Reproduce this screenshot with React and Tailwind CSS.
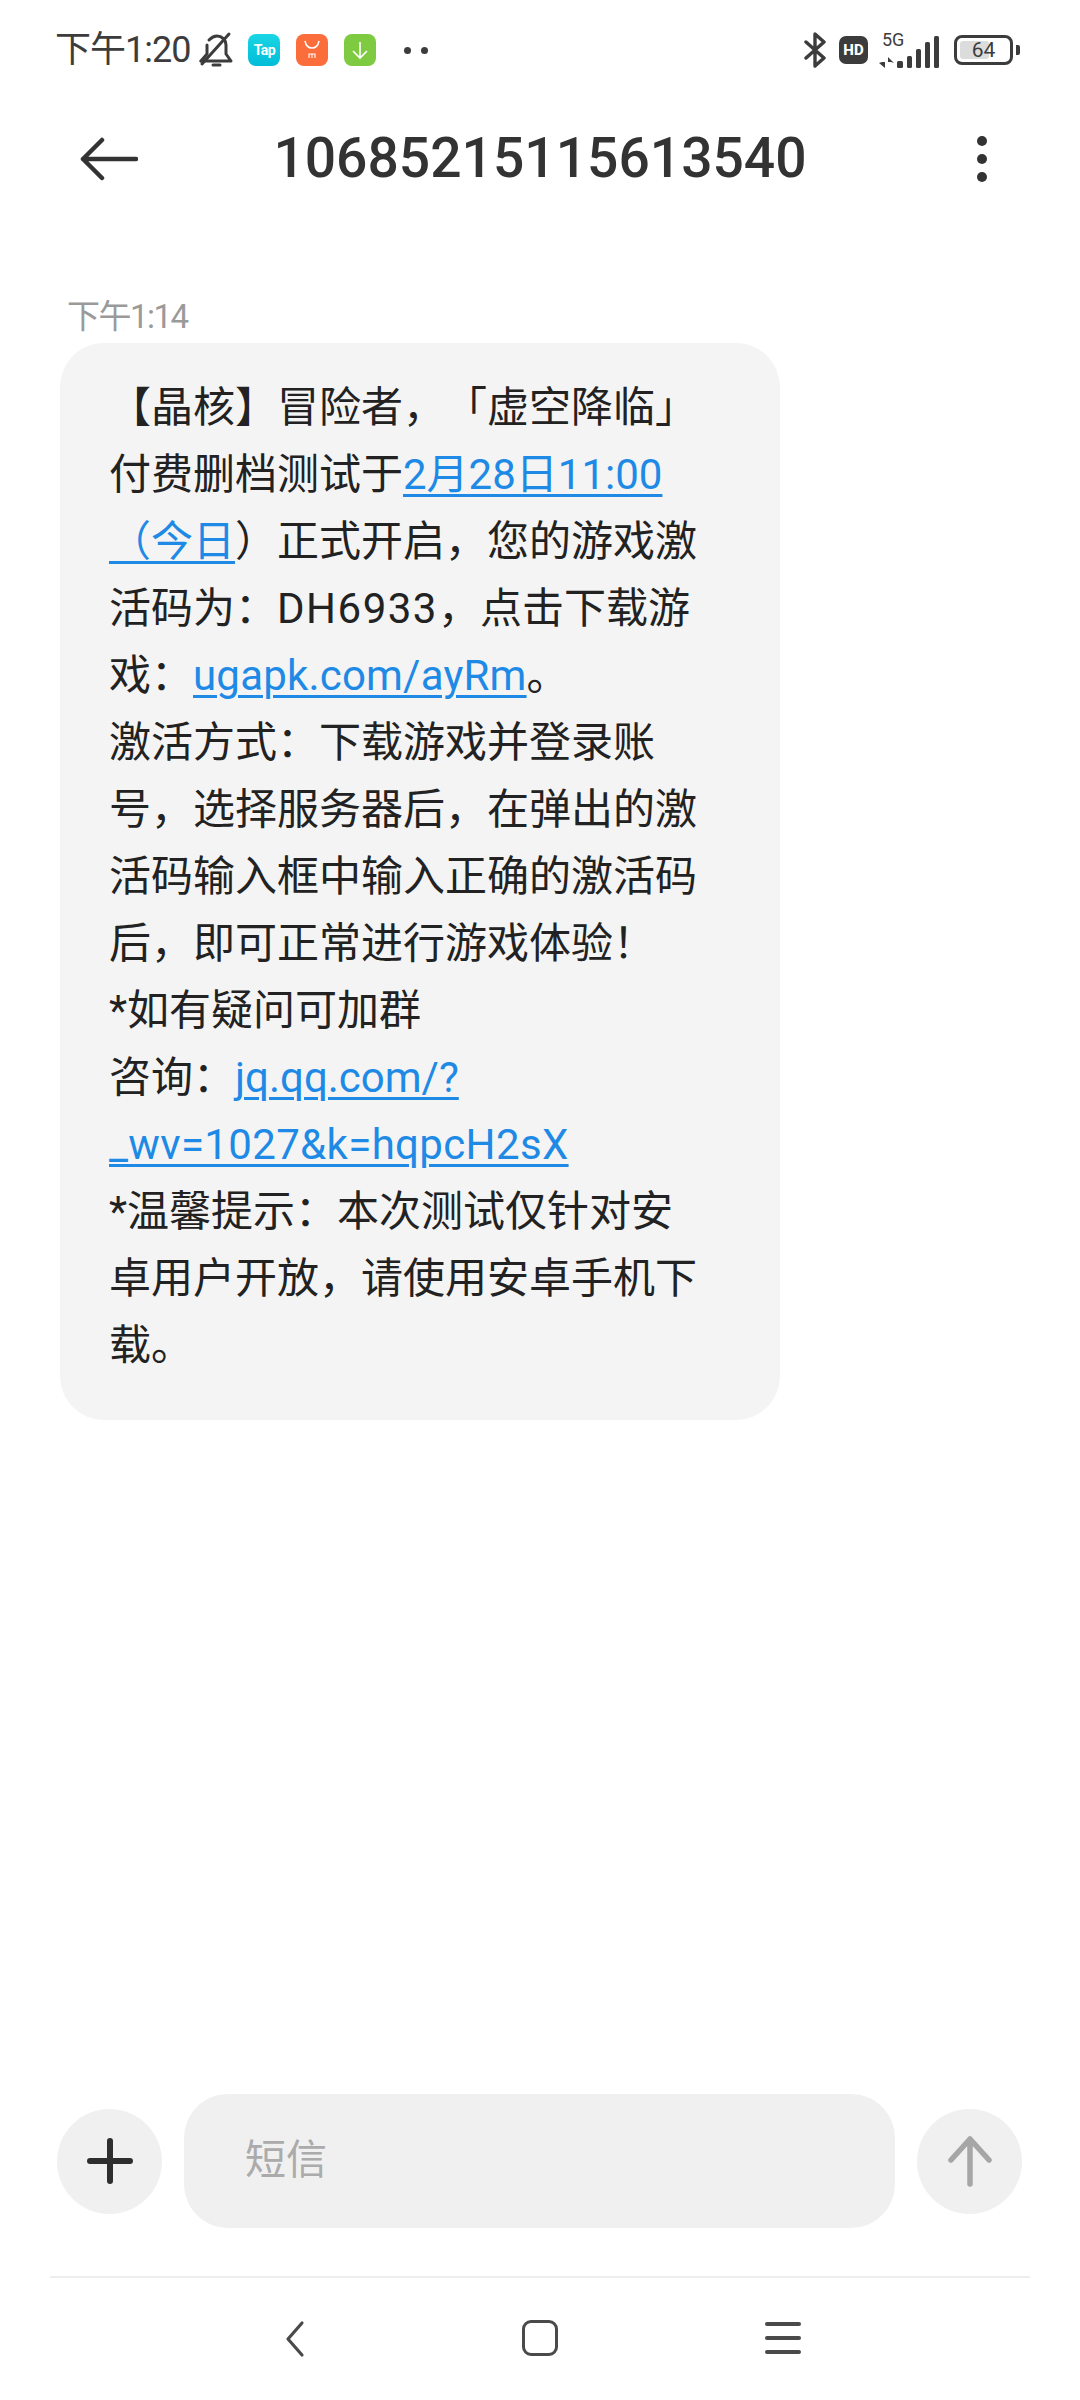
import { Fragment } from 'react';

const Link = ({ children }) => (
  <span className="text-[#1e8ae6] underline decoration-[3px] underline-offset-[5px]">{children}</span>
);

const lines = [
  '【晶核】冒险者，「虚空降临」',
  <Fragment>付费删档测试于<Link>2月28日11:00</Link></Fragment>,
  <Fragment><Link>（今日</Link>）正式开启，您的游戏激</Fragment>,
  <Fragment>活码为：<span className="tracking-[1.5px]">DH6933</span>，点击下载游</Fragment>,
  <Fragment>戏：<span className="tracking-[0.2px]"><Link>ugapk.com/ayRm</Link></span>。</Fragment>,
  '激活方式：下载游戏并登录账',
  '号，选择服务器后，在弹出的激',
  '活码输入框中输入正确的激活码',
  '后，即可正常进行游戏体验！',
  '*如有疑问可加群',
  <Fragment>咨询：<Link>jq.qq.com/?</Link></Fragment>,
  <span className="tracking-[0.35px]"><Link>_wv=1027&amp;k=hqpcH2sX</Link></span>,
  '*温馨提示：本次测试仅针对安',
  '卓用户开放，请使用安卓手机下',
  '载。',
];

function StatusBar() {
  return (
    <div className="h-[100px] flex items-center pl-[55px] pr-[60px] text-[#3c3c3c]">
      <span className="text-[36px] leading-none tracking-[-1px]">下午1:20</span>
      <svg className="ml-[9px]" width="36" height="38" viewBox="0 0 36 38" fill="none" stroke="#3c3c3c" strokeWidth="3" strokeLinecap="round" strokeLinejoin="round">
        <path d="M2 30h30l-5-7v-9c0-5-4-9-9-9-3 0-6 2-8 4" />
        <path d="M8 14v9l-6 7" />
        <path d="M3 33 30 3" />
        <path d="M14 34h7" />
      </svg>
      <div className="ml-[13px] w-[32px] h-[32px] rounded-[8px] bg-gradient-to-b from-[#19d6e4] to-[#00bcd8] flex items-center justify-center text-white text-[14px] font-bold tracking-[-0.5px]">Tap</div>
      <div className="ml-[16px] w-[32px] h-[32px] rounded-[8px] bg-[#fb6d3b] flex flex-col items-center justify-center">
        <svg width="20" height="22" viewBox="0 0 20 22" fill="none" stroke="#fff">
          <path d="M3 2c1 5 4 7 7 7s6-2 7-7" strokeWidth="1.5" />
          <path d="M7 19v-4h6v4M10 15v4" strokeWidth="1.1" />
        </svg>
      </div>
      <div className="ml-[16px] w-[32px] h-[32px] rounded-[8px] bg-[#7ecb41] flex items-center justify-center">
        <svg width="20" height="22" viewBox="0 0 20 22" fill="none" stroke="#fff" strokeWidth="1.6">
          <path d="M10 3v16M3 12l7 7 7-7" />
        </svg>
      </div>
      <div className="ml-[28px] w-[7px] h-[7px] rounded-full bg-[#3c3c3c]" />
      <div className="ml-[10px] w-[7px] h-[7px] rounded-full bg-[#3c3c3c]" />
      <div className="flex-1" />
      <svg width="22" height="36" viewBox="0 0 22 36" fill="none" stroke="#3c3c3c" strokeWidth="3.4" strokeLinejoin="round" strokeLinecap="round">
        <path d="M2 10l18 16-9 8V2l9 8L2 26" />
      </svg>
      <div className="ml-[13px] w-[29px] h-[28px] rounded-[7px] bg-[#3c3c3c] flex items-center justify-center text-white text-[15px] font-extrabold leading-none">HD</div>
      <div className="ml-[11px] w-[61px] h-[36px] relative">
        <span className="absolute left-[3px] top-[-3px] text-[18px] leading-[22px]">5G</span>
        <svg className="absolute left-0 top-0" width="61" height="36" viewBox="0 0 61 36" fill="#3c3c3c">
          <path d="M6 25v11L0 31l3-1h3zM9 25v11l0-6h3l3 1-6-6z" />
          <rect x="18" y="29" width="6" height="7" rx="1.5" />
          <rect x="28" y="24" width="5" height="12" rx="1.5" />
          <rect x="37" y="17" width="5" height="19" rx="1.5" />
          <rect x="46" y="10" width="5" height="26" rx="1.5" />
          <rect x="55" y="4" width="5" height="32" rx="1.5" />
        </svg>
      </div>
      <div className="ml-[14px] w-[59px] h-[30px] rounded-[8px] border-[3px] border-[#3c3c3c] p-[3px] relative flex">
        <div className="w-[62%] bg-[#dcdcdc] rounded-[3px]" />
        <span className="absolute inset-0 flex items-center justify-center text-[21px] leading-none">64</span>
      </div>
      <div className="ml-[3px] w-[4px] h-[10px] rounded-r-[2px] bg-[#3c3c3c]" />
    </div>
  );
}

function Header() {
  return (
    <div className="h-[118px] grid grid-cols-[1fr_auto_1fr] items-center text-[#333333]">
      <div className="pl-[80px]">
        <svg className="block" width="58" height="44" viewBox="0 0 58 44" fill="none" stroke="#333333" strokeWidth="4.5" strokeLinecap="round" strokeLinejoin="round">
          <path d="M56 22H3M22 3 3 22l19 19" />
        </svg>
      </div>
      <div className="text-[55.2px] leading-none font-medium">10685215115613540</div>
      <div className="flex flex-col items-end gap-[8px] pr-[93px]">
        <div className="w-[10px] h-[10px] rounded-full bg-[#333333]" />
        <div className="w-[10px] h-[10px] rounded-full bg-[#333333]" />
        <div className="w-[10px] h-[10px] rounded-full bg-[#333333]" />
      </div>
    </div>
  );
}

function Composer() {
  return (
    <div className="flex items-center pl-[57px] pr-[58px]">
      <div className="w-[105px] h-[105px] rounded-full bg-[#f0f0f0] flex items-center justify-center">
        <svg width="46" height="46" viewBox="0 0 46 46" stroke="#2e2e2e" strokeWidth="6" strokeLinecap="round">
          <path d="M23 3v40M3 23h40" />
        </svg>
      </div>
      <div className="ml-[22px] w-[711px] h-[134px] rounded-[44px] bg-[#f0f0f0] flex items-center pl-[61px] text-[41px] text-[#ababab]">短信</div>
      <div className="ml-[22px] w-[105px] h-[105px] rounded-full bg-[#f0f0f0] flex items-center justify-center">
        <svg width="46" height="52" viewBox="0 0 46 52" fill="none" stroke="#a6a6a6" strokeWidth="5.5" strokeLinecap="round" strokeLinejoin="round">
          <path d="M23 49V4M4 25 23 4l19 21" />
        </svg>
      </div>
    </div>
  );
}

function NavBar() {
  return (
    <div className="mx-[50px] mt-[48px] border-t-[2px] border-[#eeeeee] h-[124px] flex items-start">
      <svg className="ml-[233px] mt-[42px]" width="22" height="38" viewBox="0 0 22 38" fill="none" stroke="#4a4a4a" strokeWidth="3.2" strokeLinecap="round" strokeLinejoin="round">
        <path d="M19 3 5 19l14 16" />
      </svg>
      <div className="ml-[217px] mt-[42px] w-[36px] h-[36px] rounded-[9px] border-[3.5px] border-[#4a4a4a]" />
      <div className="ml-[207px] mt-[44px] w-[36px] flex flex-col gap-[10px]">
        <div className="h-[4px] bg-[#4a4a4a] rounded-full" />
        <div className="h-[4px] bg-[#4a4a4a] rounded-full" />
        <div className="h-[4px] bg-[#4a4a4a] rounded-full" />
      </div>
    </div>
  );
}

export default function App() {
  return (
    <div className="w-[1080px] h-[2400px] bg-white flex flex-col font-['Roboto','Noto_Sans_CJK_SC',sans-serif]">
      <StatusBar />
      <Header />
      <div className="mt-[81px] pl-[67px] text-[33px] leading-[36px] tracking-[-1.5px] text-[#9a9a9a]">下午1:14</div>
      <div className="mt-[8px] ml-[60px] w-[720px] h-[1077px] rounded-[44px] bg-[#f4f4f4] pt-[31px] pl-[49px] text-[42px] leading-[67px] text-[#222222] [text-spacing-trim:space-all]">
        {lines.map((line, i) => (
          <div key={i} className="whitespace-nowrap">{line}</div>
        ))}
      </div>
      <div className="flex-1" />
      <Composer />
      <NavBar />
    </div>
  );
}
